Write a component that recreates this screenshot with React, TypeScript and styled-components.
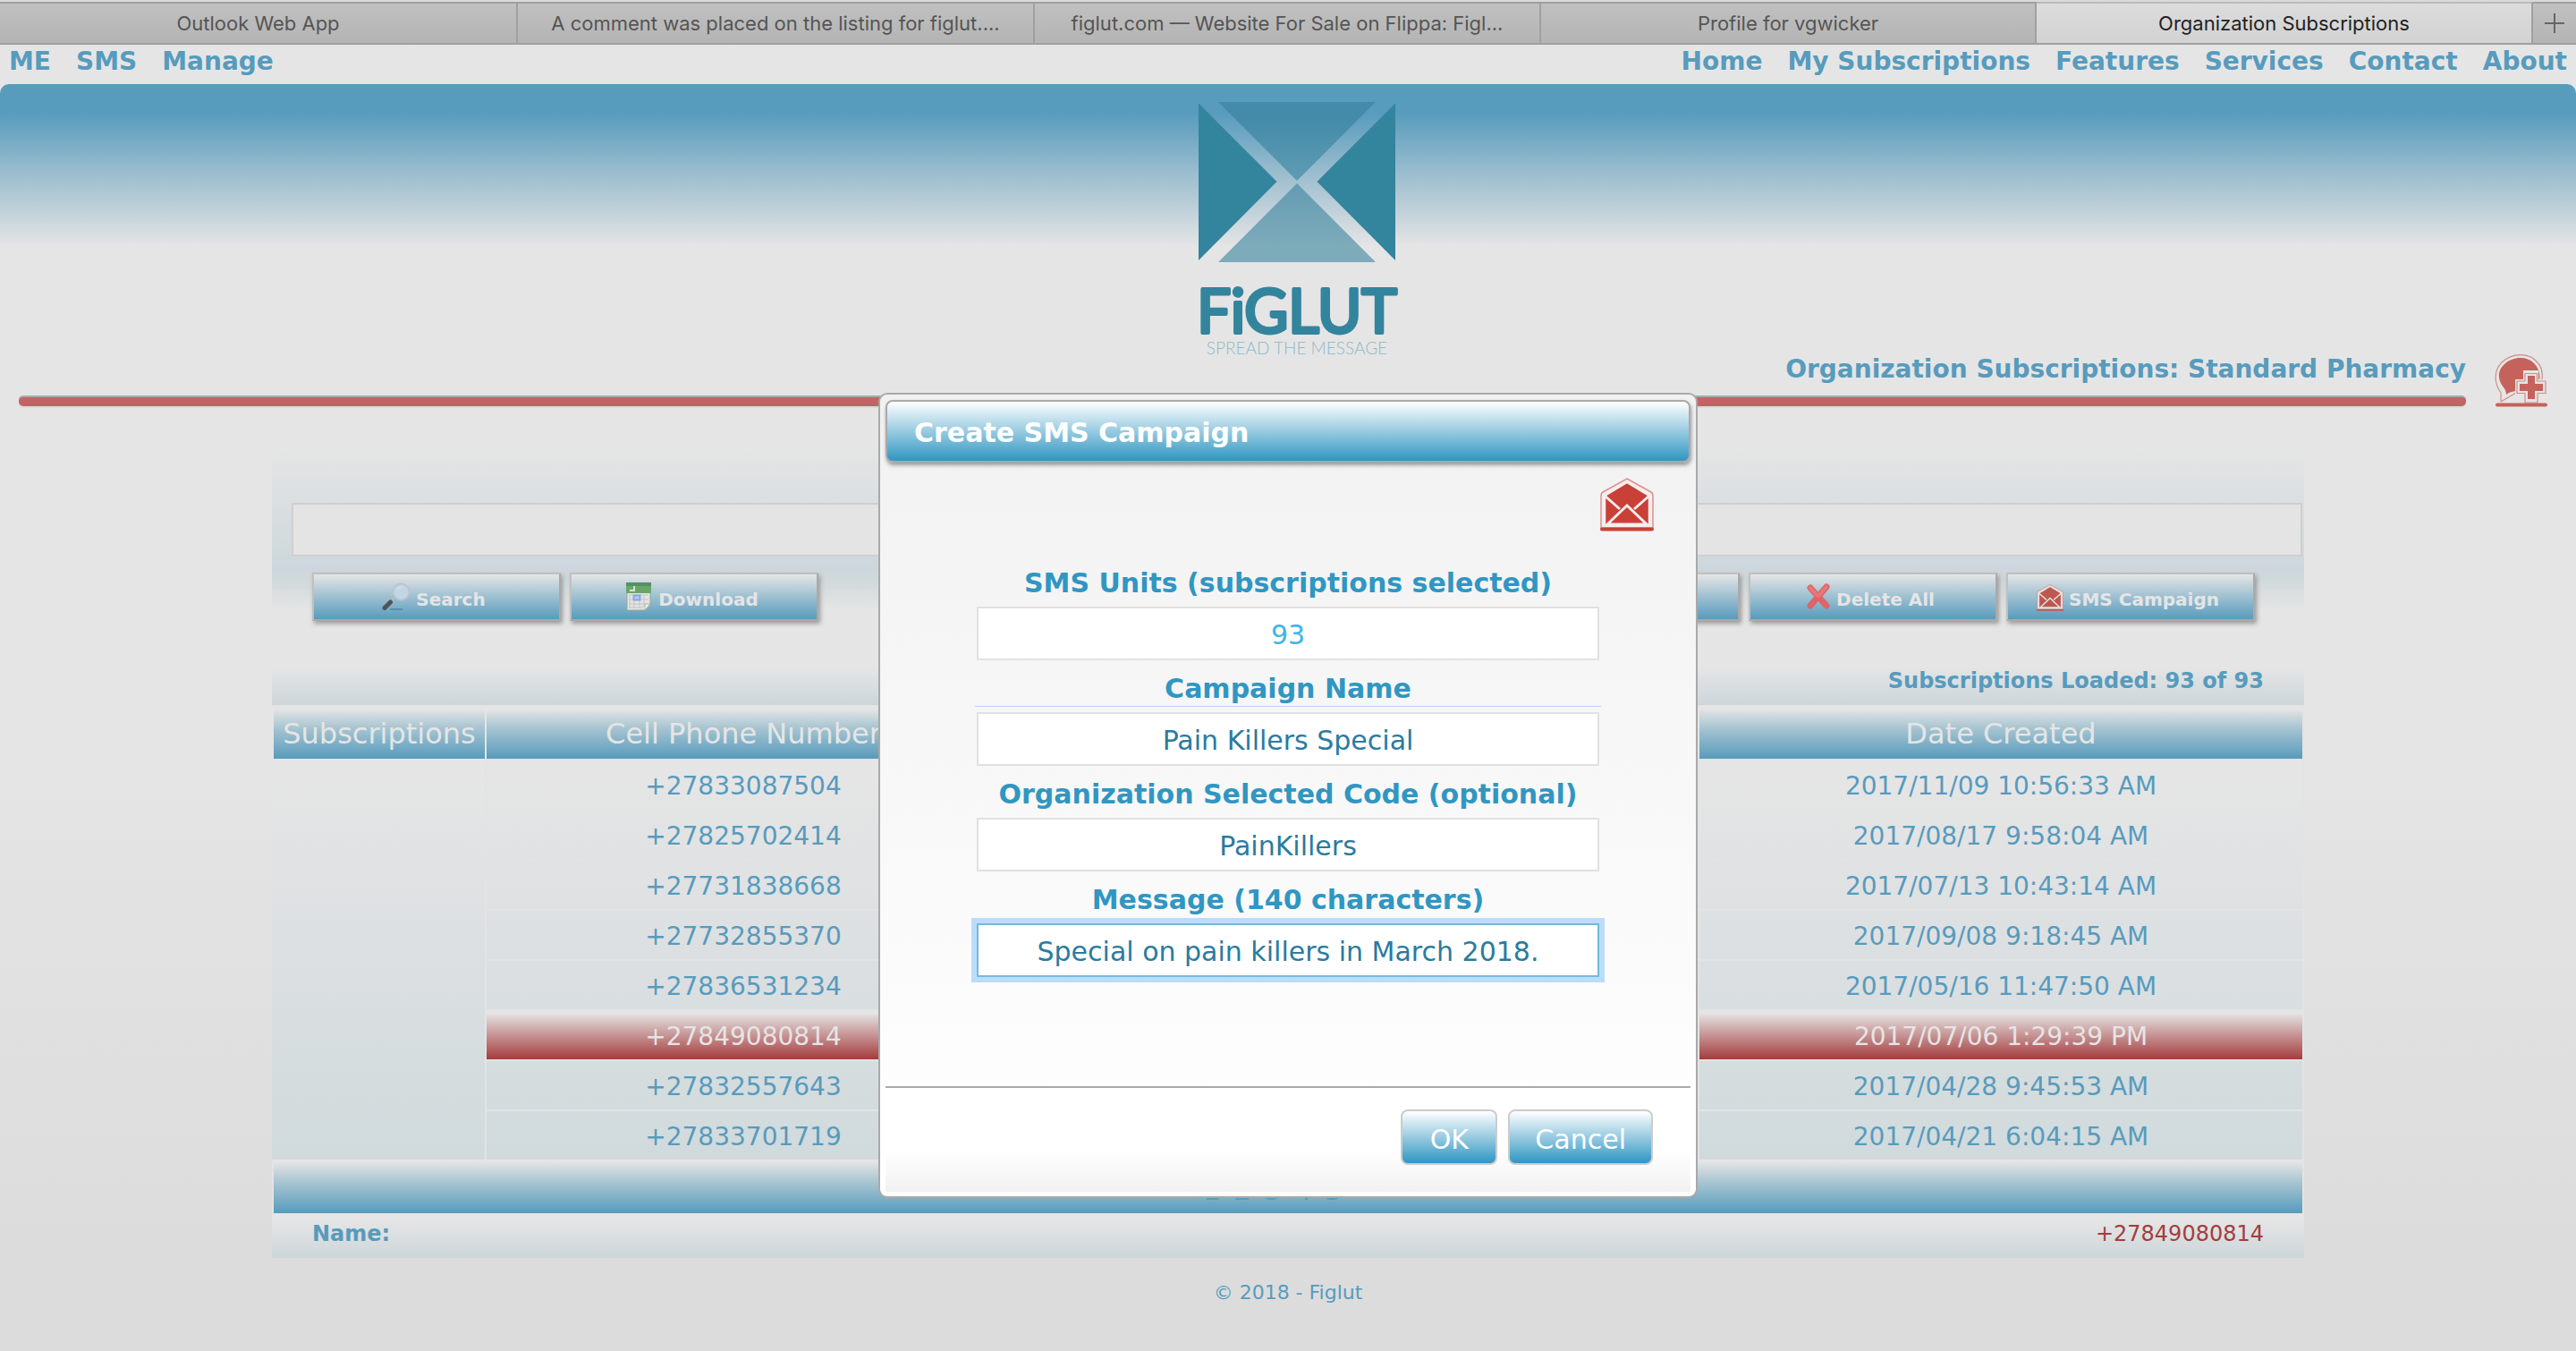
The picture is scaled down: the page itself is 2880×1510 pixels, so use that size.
import React from 'react';
import styled, { createGlobalStyle, css } from 'styled-components';

const sans = '"DejaVu Sans", Verdana, sans-serif';

const GlobalStyle = createGlobalStyle`
  *, *::before, *::after { box-sizing: border-box; }
  body { margin: 0; background: #ddd; }
  button, input { font-family: inherit; }
`;

const Page = styled.div`
  position: relative;
  min-height: 100vh;
  font-family: ${sans};
  color: #579bbd;
  background: linear-gradient(#e5e5e5 55%, #dcdcdc 93%);
`;

/* ---------- browser tabs ---------- */

const TabStrip = styled.nav`
  display: grid;
  grid-template-columns: 579fr 578fr 566fr 554fr 555fr 48px;
  height: 50px;
  border-top: 2px solid #dadada;
  font-family: Inter, "Liberation Sans", sans-serif;
`;

const Tab = styled.a<{ $active?: boolean }>`
  overflow: hidden;
  padding: 0 12px;
  border: solid #a0a0a0;
  border-width: 2px 2px 2px 0;
  border-top-color: ${(p) => (p.$active ? '#bababa' : '#a0a0a0')};
  background: ${(p) => (p.$active ? 'linear-gradient(#dcdcdc, #d2d2d2)' : 'linear-gradient(#c0c0c0, #b4b4b4)')};
  color: ${(p) => (p.$active ? '#222' : '#555')};
  font-size: 22px;
  line-height: 44px;
  text-align: center;
  text-decoration: none;
  white-space: nowrap;
`;

const NewTab = styled.button`
  display: flex;
  align-items: center;
  justify-content: center;
  padding: 0;
  border: solid #a0a0a0;
  border-width: 2px 0;
  background: linear-gradient(#c0c0c0, #b4b4b4);
`;

/* ---------- header ---------- */

const MenuBar = styled.nav`
  display: flex;
  justify-content: space-between;
  height: 44px;
  padding: 0 10px;
`;

const MenuGroup = styled.div`
  display: flex;
  gap: 28px;
`;

const MenuLink = styled.a`
  color: #579bbd;
  font-size: 28px;
  font-weight: bold;
  line-height: 38px;
  text-decoration: none;
`;

const Banner = styled.header`
  display: flex;
  justify-content: center;
  padding: 20px 0 0 20px;
  border-radius: 10px 10px 0 0;
  background: linear-gradient(#579bbd 32px, #a1c0d0 106px, #e5e5e5 182px);
`;

const LogoArt = styled.svg`
  display: block;
  overflow: visible;
`;

const TitleRow = styled.section`
  display: flex;
  gap: 32px;
  padding: 0 31px 0 21px;
`;

const TitleColumn = styled.div`
  flex: 1;
`;

const PageTitle = styled.h1`
  height: 47px;
  margin: 0;
  font-size: 28px;
  line-height: 36px;
  text-align: right;
`;

const TitleRule = styled.div`
  height: 12px;
  border-top: 2px solid #aaa;
  border-radius: 5px;
  background: #c16465;
  box-shadow: 0 2px 1px #dadada;
`;

const IconButton = styled.button`
  display: block;
  width: 60px;
  height: 61px;
  padding: 0;
  border: 0;
  background: none;
`;

/* ---------- search and actions ---------- */

const Content = styled.main`
  margin: 44px 304px 0;
`;

const FilterPanel = styled.form`
  padding: 62px 2px 0 22px;
  border-radius: 20px;
  background: linear-gradient(#e5e5e5, #dadfe1 32%, #cfd9dc 64%, #cdd6dd 70%, #cfd8da 75%, #e5e5e5 94%);
`;

const SearchInput = styled.input`
  display: block;
  width: 100%;
  height: 60px;
  padding: 0 16px;
  border: 2px solid #cfcfcf;
  background: #e4e4e4;
  color: #2a7ba0;
  font-size: 28px;
`;

const ActionBar = styled.div`
  display: flex;
  justify-content: space-between;
  padding: 18px 53px 0 23px;
`;

const ActionGroup = styled.div`
  display: flex;
  gap: 10px;
`;

const ActionButton = styled.button`
  display: flex;
  align-items: flex-end;
  justify-content: center;
  gap: 6px;
  width: 278px;
  height: 54px;
  padding: 0 6px 9px 0;
  border: solid;
  border-width: 2px;
  border-color: #c0c0c0 #aaa #aaa #c0c0c0;
  background: linear-gradient(#e5e5e5, #579bbd);
  box-shadow: 2px 3px 5px #999;
  color: #e5e5e5;
  font-size: 20px;
  font-weight: bold;
  line-height: 26px;
`;

/* ---------- table ---------- */

const SummaryBar = styled.div<{ $spaced?: boolean }>`
  display: flex;
  justify-content: space-between;
  height: 50px;
  margin-top: ${(p) => (p.$spaced ? 44 : 0)}px;
  padding: 0 45px;
  background: linear-gradient(#e5e5e5 15%, #cdd6da);
  font-size: 24px;
  line-height: 46px;
`;

const RedValue = styled.span`
  margin-left: auto;
  color: #a53c3d;
`;

const Loaded = styled.strong`
  margin-left: auto;
`;

const Grid = styled.table`
  width: 100%;
  table-layout: fixed;
  border-spacing: 0;
  border-right: 2px solid #e3e3e3;
  background: linear-gradient(#e5e5e5 80px, #dbdfe1 295px, #d0dadc 510px);
  font-size: 28px;
`;

const HeadCell = styled.th<{ $width?: number }>`
  width: ${(p) => (p.$width ? `${p.$width}px` : 'auto')};
  height: 60px;
  padding: 4px 0 0;
  border-left: 2px solid #e5e5e5;
  background: linear-gradient(#e5e5e5 4px, #a6c4d1 26px, #579bbd);
  color: #e5e5e5;
  font-size: 32px;
  font-weight: normal;
`;

const selectedCell = css`
  background: linear-gradient(#e5e5e5 2px, #a53c3d);
  color: #e5e5e5;
`;

const Cell = styled.td<{ $selected?: boolean }>`
  height: 56px;
  padding: 2px 0 0;
  border: solid #e3e3e3;
  border-width: 2px 0 0 2px;
  text-align: center;
  ${(p) => p.$selected && selectedCell}
`;

const SideCell = styled.td`
  padding: 0;
  border-left: 2px solid transparent;
`;

const PagerCell = styled.td`
  height: 60px;
  padding: 0;
  border-left: 2px solid #e3e3e3;
  background: linear-gradient(#e5e5e5 2px, #a6c4d1 26px, #579bbd);
`;

const Pager = styled.div`
  display: flex;
  justify-content: center;
  padding: 8px 34px 0 0;
`;

const PagerLink = styled.a`
  width: 34px;
  color: #579bbd;
  font-size: 32px;
  line-height: 50px;
  text-align: center;
  text-decoration: none;
`;

const PageFooter = styled.footer`
  padding: 24px 0 20px;
  font-size: 22px;
  line-height: 30px;
  text-align: center;
`;

/* ---------- dialog ---------- */

const Overlay = styled.div`
  position: absolute;
  inset: 0;
  display: flex;
  align-items: flex-start;
  justify-content: center;
  padding-top: 439px;
`;

const Dialog = styled.form`
  width: 916px;
  padding: 6px 6px 5px;
  border: 2px solid #a9a9a9;
  border-radius: 10px;
  background: linear-gradient(#f1f1f1, #fdfdfd 85%, #fff 87%);
`;

const DialogTitle = styled.h2`
  height: 70px;
  margin: 0;
  padding: 0 30px;
  border: 2px solid #aaa;
  border-radius: 8px;
  background: linear-gradient(#fff, #3096c2);
  box-shadow: 1px 3px 4px #999;
  color: #fff;
  font-size: 30px;
  line-height: 70px;
`;

const DialogBody = styled.div`
  padding: 17px 102px 122px;
  border-bottom: 2px solid #aaa;
`;

const DialogTools = styled.div`
  display: flex;
  justify-content: flex-end;
  margin: 0 -61px 25px 0;
`;

const Label = styled.label<{ $ruled?: boolean }>`
  position: relative;
  display: block;
  height: 58px;
  padding-top: 4px;
  color: #3096c2;
  font-size: 30px;
  font-weight: bold;
  line-height: 56px;
  text-align: center;
  white-space: nowrap;
  ${(p) =>
    p.$ruled &&
    css`
      &::after {
        content: '';
        position: absolute;
        right: -2px;
        bottom: 6px;
        left: -2px;
        height: 1px;
        background: #b9d6f5;
      }
    `}
`;

const TextInput = styled.input<{ $light?: boolean; $focused?: boolean }>`
  display: block;
  width: 100%;
  height: 60px;
  padding: 2px 8px 0;
  border: 2px solid ${(p) => (p.$focused ? '#72bbd8' : '#e1e1e1')};
  outline: 0;
  background: #fff;
  box-shadow: ${(p) => (p.$focused ? '0 0 0 6px #bbdcfb' : 'none')};
  color: ${(p) => (p.$light ? '#3db5ea' : '#2a7ba0')};
  font-size: 30px;
  text-align: center;
`;

const DialogActions = styled.div`
  display: flex;
  justify-content: flex-end;
  gap: 12px;
  padding: 24px 42px 30px;
  background: linear-gradient(#fff 60%, #f1f1f1);
`;

const DialogButton = styled.button`
  min-width: 108px;
  height: 62px;
  padding: 4px 28px 0;
  border: 2px solid #ccc;
  border-radius: 8px;
  background: linear-gradient(#fff, #3096c2);
  color: #fff;
  font-size: 30px;
`;

/* ---------- drawings ---------- */

function Logo() {
  return (
    <LogoArt width="220" height="281" viewBox="0 0 220 281" role="img" aria-label="Figlut, spread the message">
      <defs>
        <linearGradient id="flap" x1="0" y1="0" x2="0" y2="1">
          <stop offset="0.2" stopColor="#438ba9" />
          <stop offset="1" stopColor="#5f9cb2" />
        </linearGradient>
        <linearGradient id="base" x1="0" y1="0" x2="0" y2="1">
          <stop offset="0" stopColor="#639cb2" />
          <stop offset="0.8" stopColor="#7dabba" />
        </linearGradient>
      </defs>
      <path d="M0 1.500 87.500 89 0 177z" fill="#33849d" />
      <path d="M220 1.500 132.500 89 220 177z" fill="#33849d" />
      <path d="M22 0H198L110 88z" fill="url(#flap)" />
      <path d="M110 91 198 179H22z" fill="url(#base)" />
      <text
        x="110"
        y="258"
        textAnchor="middle"
        fontFamily='Lato, "Open Sans", sans-serif'
        fontSize="67"
        fill="#33849d"
        stroke="#33849d"
        strokeWidth="4"
        strokeLinejoin="round"
      >
        FiGLUT
      </text>
      <text x="110" y="282" textAnchor="middle" fontFamily='Lato, "Open Sans", sans-serif' fontSize="19" fontWeight="300" fill="#8fb9c7">
        SPREAD THE MESSAGE
      </text>
    </LogoArt>
  );
}

function AddContactIcon() {
  return (
    <svg width="60" height="61" viewBox="0 0 60 61" fill="none" aria-hidden="true">
      <path d="M7 54V44C-1 33-1 19 8 10 20-1 38-1 47 9c6 6 7 13 6 20M7 54l17-10" stroke="#d08c88" strokeWidth="1.200" />
      <path d="M13 46c0-3-1-6-3-8C3 29 3 19 11 12c10-9 25-9 33-1 7 7 8 16 4 24-5 6-14 8-23 7-4 0-8 1-12 4z" fill="#c4625b" />
      <path d="M32 19h17v10h10v17H50v11H32V46H23V29h9z" fill="#e5e5e5" />
      <path d="M34 22.500h13.500V31H57v13.500h-9V55H34V44.500h-9V31h9z" stroke="#d08c88" strokeWidth="1.200" strokeLinejoin="round" />
      <path d="M41 25v26M28 38h26" stroke="#c4625b" strokeWidth="8" />
      <path d="M3 57.500h54" stroke="#c4625b" strokeWidth="4" strokeLinecap="round" />
    </svg>
  );
}

function EnvelopeIcon({ size, color, paper }: { size: number; color: string; paper: string }) {
  return (
    <svg width={size} height={size} viewBox="0 0 60 60" fill="none" aria-hidden="true">
      <path d="M30 1 57 16c2 1 2 3 2 5v35H1V21c0-2 0-4 2-5z" fill={paper} stroke={color} strokeWidth="1.500" strokeOpacity="0.55" />
      <path d="M30 5 55 20v32H5V20z" fill={color} />
      <path d="M5 20 22 35M55 20 38 35" stroke={paper} strokeWidth="3" />
      <path d="M8 52 30 31 52 52z" stroke={paper} strokeWidth="3" />
      <path d="M30 5 55 20v33H5V20z" stroke={paper} strokeWidth="2.500" />
      <path d="M2 57.500h56" stroke={color} strokeWidth="4" strokeLinecap="round" />
    </svg>
  );
}

function SearchIcon() {
  return (
    <svg width="32" height="32" viewBox="0 0 32 32" fill="none" aria-hidden="true">
      <path d="M9 30h14" stroke="#4b87a5" strokeWidth="1.500" />
      <path d="m11 20 4-4" stroke="#aebdc6" strokeWidth="3" />
      <path d="M3 28.500 9.500 22" stroke="#505458" strokeWidth="5" strokeLinecap="round" />
      <circle cx="21.500" cy="10.500" r="9" fill="#c3d5e4" stroke="#bcc4ca" strokeWidth="2" />
      <path d="M16 9c1-4 5-5 8-4-3 0-6 2-8 4z" fill="#dfe7ee" />
    </svg>
  );
}

function SheetIcon() {
  return (
    <svg width="32" height="32" viewBox="0 0 32 32" fill="none" aria-hidden="true">
      <path d="M3 1h26v23l-6 7H3z" fill="#e3e5e3" stroke="#9aa79d" />
      <path d="M2 0h28v12H2z" fill="#69a66b" />
      <path d="M2 0h28v4H2z" fill="#549064" />
      <path d="M11 4v5H6" stroke="#d6e5d5" strokeWidth="2" />
      <path d="M5 14h22M5 19h22M5 24h20M5 28h16M6 14v15M11 14v15M17 14v15M22 14v13" stroke="#c2c5c3" />
      <path d="M10.500 14.500h7v5h-7z" fill="#b4cbf2" stroke="#86a8e6" strokeWidth="2" />
      <path d="M29 24h-6v7z" fill="#f0f0f0" stroke="#adb5ae" />
    </svg>
  );
}

function DeleteIcon() {
  return (
    <svg width="28" height="32" viewBox="0 0 28 32" fill="none" aria-hidden="true">
      <path d="m5 6 18 20M23 5 5 26" stroke="#de6468" strokeWidth="7" strokeLinecap="round" />
      <path d="m5 6 8 9M23 5l-8 9" stroke="#e4787b" strokeWidth="4" strokeLinecap="round" />
    </svg>
  );
}

/* ---------- data ---------- */

const tabs = [
  'Outlook Web App',
  'A comment was placed on the listing for figlut....',
  'figlut.com — Website For Sale on Flippa: Figl...',
  'Profile for vgwicker',
  'Organization Subscriptions',
];

const rows = [
  ['+27833087504', '2017/11/09 10:56:33 AM'],
  ['+27825702414', '2017/08/17 9:58:04 AM'],
  ['+27731838668', '2017/07/13 10:43:14 AM'],
  ['+27732855370', '2017/09/08 9:18:45 AM'],
  ['+27836531234', '2017/05/16 11:47:50 AM'],
  ['+27849080814', '2017/07/06 1:29:39 PM'],
  ['+27832557643', '2017/04/28 9:45:53 AM'],
  ['+27833701719', '2017/04/21 6:04:15 AM'],
];

const selectedPhone = '+27849080814';

const fields = [
  { id: 'units', label: 'SMS Units (subscriptions selected)', value: '93', light: true },
  { id: 'name', label: 'Campaign Name', value: 'Pain Killers Special', ruled: true },
  { id: 'code', label: 'Organization Selected Code (optional)', value: 'PainKillers' },
  { id: 'message', label: 'Message (140 characters)', value: 'Special on pain killers in March 2018.', focused: true },
];

export default function App() {
  return (
    <Page>
      <GlobalStyle />
      <TabStrip>
        {tabs.map((tab, i) => (
          <Tab key={tab} href="#" $active={i === tabs.length - 1}>
            {tab}
          </Tab>
        ))}
        <NewTab type="button" aria-label="New tab">
          <svg width="22" height="22" viewBox="0 0 22 22" aria-hidden="true">
            <path d="M11 0v22M0 11h22" stroke="#666" strokeWidth="2" />
          </svg>
        </NewTab>
      </TabStrip>

      <MenuBar>
        <MenuGroup>
          {['ME', 'SMS', 'Manage'].map((item) => (
            <MenuLink key={item} href="#">{item}</MenuLink>
          ))}
        </MenuGroup>
        <MenuGroup>
          {['Home', 'My Subscriptions', 'Features', 'Services', 'Contact', 'About'].map((item) => (
            <MenuLink key={item} href="#">{item}</MenuLink>
          ))}
        </MenuGroup>
      </MenuBar>

      <Banner>
        <Logo />
      </Banner>

      <TitleRow>
        <TitleColumn>
          <PageTitle>Organization Subscriptions: Standard Pharmacy</PageTitle>
          <TitleRule />
        </TitleColumn>
        <IconButton type="button" aria-label="Add subscription">
          <AddContactIcon />
        </IconButton>
      </TitleRow>

      <Content>
        <FilterPanel>
          <SearchInput type="text" aria-label="Search subscriptions" />
          <ActionBar>
            <ActionGroup>
              <ActionButton type="button"><SearchIcon />Search</ActionButton>
              <ActionButton type="button"><SheetIcon />Download</ActionButton>
            </ActionGroup>
            <ActionGroup>
              <ActionButton type="button" aria-label="Delete" />
              <ActionButton type="button"><DeleteIcon />Delete All</ActionButton>
              <ActionButton type="button">
                <EnvelopeIcon size={30} color="#bd5850" paper="#e5e0e0" />
                SMS Campaign
              </ActionButton>
            </ActionGroup>
          </ActionBar>
        </FilterPanel>

        <SummaryBar $spaced>
          <Loaded>Subscriptions Loaded: 93 of 93</Loaded>
        </SummaryBar>

        <Grid>
          <thead>
            <tr>
              <HeadCell $width={238}>Subscriptions</HeadCell>
              <HeadCell $width={576}>Cell Phone Number</HeadCell>
              <HeadCell />
              <HeadCell $width={676}>Date Created</HeadCell>
            </tr>
          </thead>
          <tbody>
            {rows.map(([phone, created], i) => (
              <tr key={phone}>
                {i === 0 && <SideCell rowSpan={rows.length} />}
                <Cell $selected={phone === selectedPhone}>{phone}</Cell>
                <Cell $selected={phone === selectedPhone} />
                <Cell $selected={phone === selectedPhone}>{created}</Cell>
              </tr>
            ))}
          </tbody>
          <tfoot>
            <tr>
              <PagerCell colSpan={4}>
                <Pager>
                  {[1, 2, 3, 4, 5].map((n) => (
                    <PagerLink key={n} href="#">{n}</PagerLink>
                  ))}
                </Pager>
              </PagerCell>
            </tr>
          </tfoot>
        </Grid>

        <SummaryBar>
          <strong>Name:</strong>
          <RedValue>{selectedPhone}</RedValue>
        </SummaryBar>
      </Content>

      <PageFooter>© 2018 - Figlut</PageFooter>

      <Overlay>
        <Dialog role="dialog" aria-labelledby="dialog-title">
          <DialogTitle id="dialog-title">Create SMS Campaign</DialogTitle>
          <DialogBody>
            <DialogTools>
              <IconButton type="button" aria-label="Send message">
                <EnvelopeIcon size={60} color="#c94036" paper="#f6eeee" />
              </IconButton>
            </DialogTools>
            {fields.map((field) => (
              <React.Fragment key={field.id}>
                <Label htmlFor={field.id} $ruled={field.ruled}>{field.label}</Label>
                <TextInput
                  id={field.id}
                  type="text"
                  defaultValue={field.value}
                  $light={field.light}
                  $focused={field.focused}
                />
              </React.Fragment>
            ))}
          </DialogBody>
          <DialogActions>
            <DialogButton type="submit">OK</DialogButton>
            <DialogButton type="button">Cancel</DialogButton>
          </DialogActions>
        </Dialog>
      </Overlay>
    </Page>
  );
}
